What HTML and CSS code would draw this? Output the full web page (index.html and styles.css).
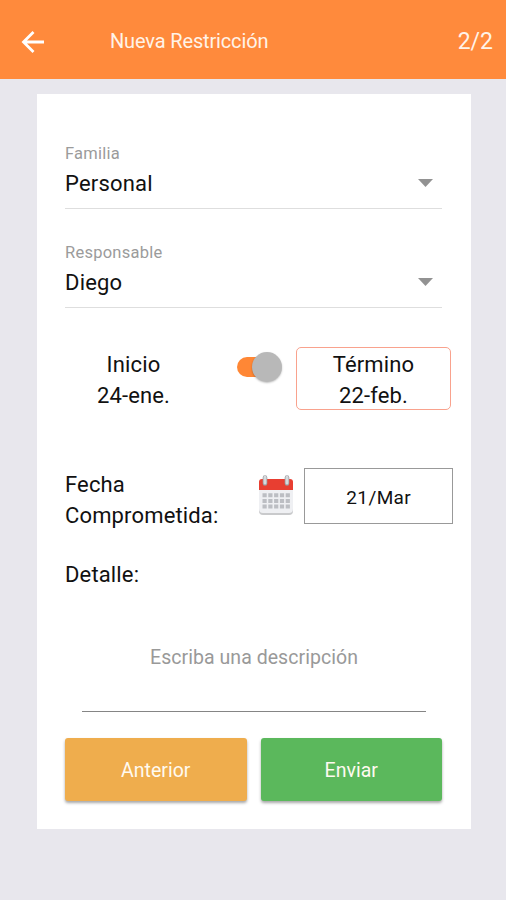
FILE: index.html
```html
<!DOCTYPE html>
<html lang="es">
<head>
<meta charset="utf-8">
<meta name="viewport" content="width=device-width, initial-scale=1">
<title>Nueva Restricción</title>
<link rel="stylesheet" href="styles.css">
</head>
<body>
<header class="bar">
  <svg class="back" viewBox="0 0 24 24" width="24" height="24"><path d="M23 12H2.5M12.5 2L2.5 12l10 10" fill="none" stroke="#fff" stroke-width="2.8"/></svg>
  <h1 class="title"><span>Nueva Restricción</span></h1>
  <span class="step">2/2</span>
</header>
<main class="card">
  <section class="field">
    <div class="label"><span>Familia</span></div>
    <div class="select"><span class="value">Personal</span><svg class="caret" width="15" height="8" viewBox="0 0 15 8"><path d="M0 0h15L7.5 8z" fill="#929292"/></svg></div>
  </section>
  <section class="field">
    <div class="label"><span>Responsable</span></div>
    <div class="select"><span class="value">Diego</span><svg class="caret" width="15" height="8" viewBox="0 0 15 8"><path d="M0 0h15L7.5 8z" fill="#929292"/></svg></div>
  </section>
  <section class="range">
    <div class="date"><span>Inicio</span><span>24-ene.</span></div>
    <div class="toggle"><div class="knob"></div></div>
    <div class="date active"><span>Término</span><span>22-feb.</span></div>
  </section>
  <section class="due">
    <div class="due-label">Fecha<br>Comprometida:</div>
    <svg class="calendar" width="36" height="42" viewBox="0 0 36 42">
      <path d="M1 12h34v25a4 4 0 0 1-4 4H5a4 4 0 0 1-4-4z" fill="#c9cacc"/>
      <path d="M1 12h34v23a4 4 0 0 1-4 4H5a4 4 0 0 1-4-4z" fill="#eff0f3"/>
      <path d="M1 16V8a3 3 0 0 1 3-3h28a3 3 0 0 1 3 3v8z" fill="#e83e31"/>
      <g stroke="#bcbec3" stroke-width="4" stroke-dasharray="4.2 1.6">
        <path d="M4.5 21.3h27.4M4.5 26.9h27.4M4.5 32.5h27.4"/>
      </g>
      <g fill="none" stroke-linecap="round">
        <path d="M7 3.5v6M29 3.5v6" stroke="#999ca1" stroke-width="4.6"/>
        <path d="M7 3v6M29 3v6" stroke="#d7d9dc" stroke-width="3"/>
      </g>
    </svg>
    <div class="due-date">21/Mar</div>
  </section>
  <div class="detail">Detalle:</div>
  <div class="description">Escriba una descripción</div>
  <div class="actions">
    <button class="btn previous">Anterior</button>
    <button class="btn send">Enviar</button>
  </div>
</main>
</body>
</html>
```
FILE: styles.css
```css
* { box-sizing: border-box; }
body {
  margin: 0;
  min-height: 900px;
  background: #e8e7ed;
  color: #111;
  font-family: Roboto, "Liberation Sans", sans-serif;
  font-size: 22px;
  line-height: 31px;
  letter-spacing: .15px;
}
svg { display: block; flex: none; }
.bar {
  display: flex;
  align-items: center;
  height: 79px;
  padding: 4px 13px 0 21px;
  background: #ff8a3c;
  color: #fff3e8;
}
.title {
  margin: 0 auto 0 65px;
  font-size: 20px;
  font-weight: 400;
  letter-spacing: -.15px;
}
.step { font-size: 23px; letter-spacing: 0; }
.card {
  width: 434px;
  height: 735px;
  margin: 15px 0 0 37px;
  padding: 49px 29px 0 28px;
  background: #fff;
}
.field {
  height: 66px;
  border-bottom: 1.5px solid #dedede;
  margin-bottom: 33px;
}
.label {
  height: 22px;
  line-height: 22px;
  font-size: 16.5px;
  letter-spacing: .25px;
  color: #9b9b9b;
}
.select {
  display: flex;
  align-items: center;
  justify-content: space-between;
  height: 37px;
  padding-right: 9px;
}
.value { letter-spacing: .2px; }
.caret { margin-top: -1px; }
.range {
  display: flex;
  height: 63px;
  margin: 39px -9px 0 0;
}
.date {
  display: flex;
  flex-direction: column;
  align-items: center;
  width: 137px;
  padding-top: 2px;
}
.active {
  width: 155px;
  height: 63px;
  margin-left: 14px;
  padding-top: 1px;
  border: 1px solid #f9a28d;
  border-radius: 5px;
}
.toggle {
  display: flex;
  align-items: center;
  justify-content: flex-end;
  width: 45px;
  height: 20px;
  margin: 10px 0 0 35px;
  background: linear-gradient(90deg, #ff8735 30px, transparent 30px);
  border-radius: 10px;
}
.knob {
  width: 30px;
  height: 30px;
  flex: none;
  border-radius: 50%;
  background: #b8b8b8;
  box-shadow: 0 1px 2px rgba(0, 0, 0, .25);
}
.due {
  display: flex;
  height: 62px;
  margin: 58px -11px 0 0;
}
.due-label { width: 193px; margin-top: 2px; line-height: 30.5px; }
.calendar { margin: 6px 0 0 1px; }
.due-date {
  width: 149px;
  height: 56px;
  margin-left: 10px;
  border: 1px solid #999;
  font-size: 19px;
  line-height: 57px;
  letter-spacing: .4px;
  text-align: center;
}
.detail { margin-top: 29px; }
.description {
  width: 344px;
  height: 70px;
  margin: 52px 0 0 17px;
  border-bottom: 1.5px solid #858585;
  color: #999;
  font-size: 19.5px;
  letter-spacing: .05px;
  text-align: center;
}
.actions {
  display: flex;
  gap: 14px;
  margin-top: 26px;
}
.btn {
  flex: 1;
  height: 63px;
  padding: 2px 0 0;
  border: 0;
  border-radius: 3px;
  box-shadow: 0 2px 3px rgba(0, 0, 0, .35);
  color: #fffaf0;
  font: 400 19.5px Roboto, "Liberation Sans", sans-serif;
}
.previous { background: #efad4d; }
.send { background: #5bb85c; }
```
